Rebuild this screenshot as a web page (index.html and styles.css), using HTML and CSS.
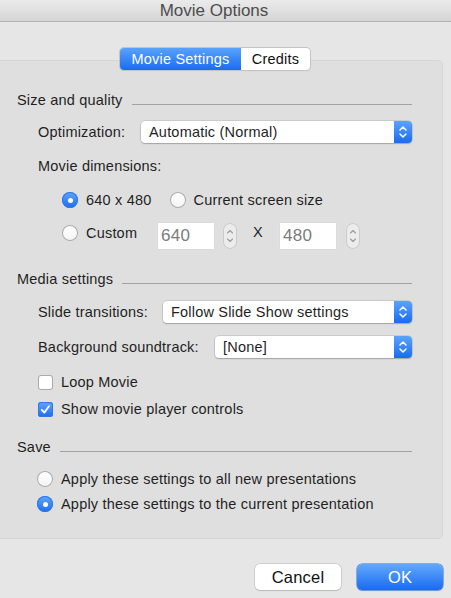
FILE: index.html
```html
<!DOCTYPE html>
<html>
<head>
<meta charset="utf-8">
<title>Movie Options</title>
<link rel="stylesheet" href="styles.css">
</head>
<body>
<div class="window">
  <div class="titlebar"><span class="title">Movie Options</span></div>

  <div class="tabs">
    <div class="seg seg-on">Movie Settings</div>
    <div class="seg">Credits</div>
  </div>

  <div class="group">
    <div class="header"><span>Size and quality</span><span class="rule"></span></div>

    <div class="row indent r-opt">
      <span class="label">Optimization:</span>
      <div class="popup w-opt"><span class="popup-text">Automatic (Normal)</span><span class="popup-arrow"><svg width="18" height="22" viewBox="0 0 18 22"><path d="M6 9 L9 6 L12 9 M6 13 L9 16 L12 13" fill="none" stroke="#fff" stroke-width="1.5" stroke-linecap="round" stroke-linejoin="round"/></svg></span></div>
    </div>

    <div class="line indent r-dim">Movie dimensions:</div>

    <div class="row dims r-r1">
      <span class="radio on"></span><span class="rtext">640 x 480</span>
      <span class="radio gap-radio"></span><span class="rtext">Current screen size</span>
    </div>

    <div class="row dims r-custom">
      <div class="custom-choice"><span class="radio"></span><span class="rtext">Custom</span></div>
      <div class="field">640</div>
      <div class="stepper"><svg width="14" height="26" viewBox="0 0 14 26"><path d="M4.5 10 L7 7.5 L9.5 10 M4.5 16 L7 18.5 L9.5 16" fill="none" stroke="#9a9a9a" stroke-width="1.1" stroke-linecap="round" stroke-linejoin="round"/></svg></div>
      <span class="times">X</span>
      <div class="field">480</div>
      <div class="stepper st2"><svg width="14" height="26" viewBox="0 0 14 26"><path d="M4.5 10 L7 7.5 L9.5 10 M4.5 16 L7 18.5 L9.5 16" fill="none" stroke="#9a9a9a" stroke-width="1.1" stroke-linecap="round" stroke-linejoin="round"/></svg></div>
    </div>

    <div class="header r-h2"><span>Media settings</span><span class="rule"></span></div>

    <div class="row indent r-slide">
      <span class="label">Slide transitions:</span>
      <div class="popup w-slide"><span class="popup-text">Follow Slide Show settings</span><span class="popup-arrow"><svg width="18" height="22" viewBox="0 0 18 22"><path d="M6 9 L9 6 L12 9 M6 13 L9 16 L12 13" fill="none" stroke="#fff" stroke-width="1.5" stroke-linecap="round" stroke-linejoin="round"/></svg></span></div>
    </div>

    <div class="row indent r-bg">
      <span class="label">Background soundtrack:</span>
      <div class="popup w-bg"><span class="popup-text">[None]</span><span class="popup-arrow"><svg width="18" height="22" viewBox="0 0 18 22"><path d="M6 9 L9 6 L12 9 M6 13 L9 16 L12 13" fill="none" stroke="#fff" stroke-width="1.5" stroke-linecap="round" stroke-linejoin="round"/></svg></span></div>
    </div>

    <div class="row indent r-loop">
      <span class="check"></span><span class="ctext">Loop Movie</span>
    </div>
    <div class="row indent r-show">
      <span class="check on"><svg width="15" height="15" viewBox="0 0 15 15"><path d="M3.8 7.8 L6.3 10.6 L11 4.2" fill="none" stroke="#fff" stroke-width="1.8" stroke-linecap="round" stroke-linejoin="round"/></svg></span><span class="ctext">Show movie player controls</span>
    </div>

    <div class="header r-h3"><span>Save</span><span class="rule"></span></div>

    <div class="row save r-s1">
      <span class="radio"></span><span class="ctext">Apply these settings to all new presentations</span>
    </div>
    <div class="row save r-s2">
      <span class="radio on"></span><span class="ctext">Apply these settings to the current presentation</span>
    </div>
  </div>

  <div class="buttons">
    <div class="btn">Cancel</div>
    <div class="btn btn-ok">OK</div>
  </div>
</div>
</body>
</html>
```

FILE: styles.css
```css
html, body {
  margin: 0;
  padding: 0;
}
body {
  width: 451px;
  height: 598px;
  background: #e6e6e6;
  font-family: "Liberation Sans", Arial, sans-serif;
  font-size: 14.5px;
  letter-spacing: 0.2px;
  color: #1f1f1f;
  overflow: hidden;
}
.window {
  display: flex;
  flex-direction: column;
  height: 598px;
}
.titlebar {
  height: 21px;
  border-bottom: 1px solid #b3b3b3;
  background: linear-gradient(#ebebeb, #d5d5d5);
  display: flex;
  align-items: center;
  justify-content: center;
  padding-right: 23px;
}
.title {
  font-size: 17px;
  letter-spacing: 0;
  color: #4d4d4d;
  line-height: 20px;
}
.tabs {
  position: relative;
  z-index: 1;
  display: flex;
  margin: 26px 0 0 120px;
  width: 190px;
  height: 22px;
  border-radius: 4px;
  box-shadow: 0 0 0 1px #c3c3c3, 0 1px 1px rgba(0,0,0,0.12);
  background: #fff;
  overflow: hidden;
}
.seg {
  display: flex;
  align-items: center;
  justify-content: center;
  width: 69px;
  height: 22px;
  color: #111;
}
.seg-on {
  width: 121px;
  color: #fff;
  background: linear-gradient(#58a2fd, #1a6cf0);
}
.group {
  box-sizing: border-box;
  margin-top: -10px;
  width: 443px;
  background: #dfdfdf;
  border: 1px solid #d6d6d6;
  border-left: none;
  border-radius: 0 5px 5px 0;
  padding: 31px 30px 26px 17px;
  display: flex;
  flex-direction: column;
}
.header {
  height: 16px;
  display: flex;
  align-items: center;
  line-height: 16px;
}
.rule {
  flex: 1;
  height: 1px;
  background: #a3a3a3;
  margin: 8px 0 0 9px;
}
.r-h2 { margin-top: 22px; }
.r-h3 { margin-top: 22px; }
.row {
  display: flex;
  align-items: center;
}
.line {
  height: 16px;
  line-height: 16px;
}
.indent { margin-left: 21px; }
.dims { margin-left: 45px; }
.save { margin-left: 20px; height: 16px; }
.label { line-height: 16px; }

.r-opt { margin-top: 13px; height: 22px; }
.r-dim { margin-top: 15px; }
.r-r1 { margin-top: 18px; height: 16px; }
.r-custom { margin-top: 15px; height: 26px; }
.r-slide { margin-top: 14px; height: 22px; }
.r-bg { margin-top: 13px; height: 22px; }
.r-loop { margin-top: 16px; height: 16px; }
.r-show { margin-top: 11px; height: 16px; }
.r-s1 { margin-top: 16px; }
.r-s2 { margin-top: 9px; }

.popup {
  margin-left: auto;
  height: 22px;
  display: flex;
  background: #fff;
  border-radius: 4px;
  box-shadow: 0 0 0 0.5px rgba(0,0,0,0.18), 0 1px 1.5px rgba(0,0,0,0.2);
  overflow: hidden;
}
.w-opt { width: 271px; }
.w-slide { width: 249px; }
.w-bg { width: 197px; }
.popup-text {
  flex: 1;
  padding-left: 8px;
  line-height: 22px;
  white-space: nowrap;
}
.popup-arrow {
  width: 18px;
  height: 22px;
  background: linear-gradient(#5aa4fd, #1a6bf0);
}
.popup-arrow svg { display: block; }

.radio {
  width: 16px;
  height: 16px;
  border-radius: 50%;
  background: linear-gradient(#ffffff, #f4f4f4);
  box-shadow: inset 0 0 0 1px #a9a9a9;
  flex: none;
  position: relative;
}
.radio.on {
  background: linear-gradient(#5fa6fd, #1d6df0);
  box-shadow: inset 0 0 0 1px #2f78e6;
}
.radio.on::after {
  content: "";
  position: absolute;
  left: 5.5px;
  top: 5.5px;
  width: 5px;
  height: 5px;
  border-radius: 50%;
  background: #fff;
}
.rtext { margin-left: 8px; line-height: 16px; white-space: nowrap; }
.ctext { margin-left: 8px; line-height: 16px; white-space: nowrap; }
.gap-radio { margin-left: 18px; }

.custom-choice {
  align-self: flex-start;
  margin-top: 2px;
  display: flex;
  align-items: center;
  width: 96px;
}
.field {
  width: 53px;
  height: 26px;
  background: #fff;
  box-shadow: 0 0 0 0.5px #d8d8d8;
  color: #7c7c7c;
  font-size: 17px;
  letter-spacing: 0.3px;
  line-height: 26px;
  padding-left: 3px;
}
.stepper {
  margin-left: 9px;
  width: 14px;
  height: 26px;
  border-radius: 7px;
  background: #ececec;
  box-shadow: inset 0 0 0 1px #cbcbcb;
}
.stepper svg { display: block; }
.st2 { margin-left: 10px; }
.times {
  align-self: flex-start;
  margin: 2px 17px 0 16px;
  font-size: 14.5px;
  line-height: 14px;
}

.check {
  width: 15px;
  height: 15px;
  border-radius: 3px;
  background: #fff;
  box-shadow: inset 0 0 0 1px #aaaaaa;
  flex: none;
}
.check.on {
  background: linear-gradient(#5fa6fd, #1d6df0);
  box-shadow: inset 0 0 0 1px #2f78e6;
}
.check svg { display: block; }

.buttons {
  margin-top: 25px;
  display: flex;
  justify-content: flex-end;
  gap: 16px;
  padding-right: 8px;
}
.btn {
  width: 86px;
  height: 26px;
  box-sizing: border-box;
  border-radius: 5px;
  background: #fff;
  box-shadow: 0 0 0 0.5px #b8b8b8, 0 1px 1px rgba(0,0,0,0.18);
  display: flex;
  align-items: center;
  justify-content: center;
  font-size: 16.5px;
  letter-spacing: 0.2px;
  color: #111;
}
.btn-ok {
  color: #fff;
  background: linear-gradient(#62a9fd, #1a6bf0);
  box-shadow: 0 0 0 0.5px #2a6fd8, 0 1px 1px rgba(0,0,0,0.18);
}
```
